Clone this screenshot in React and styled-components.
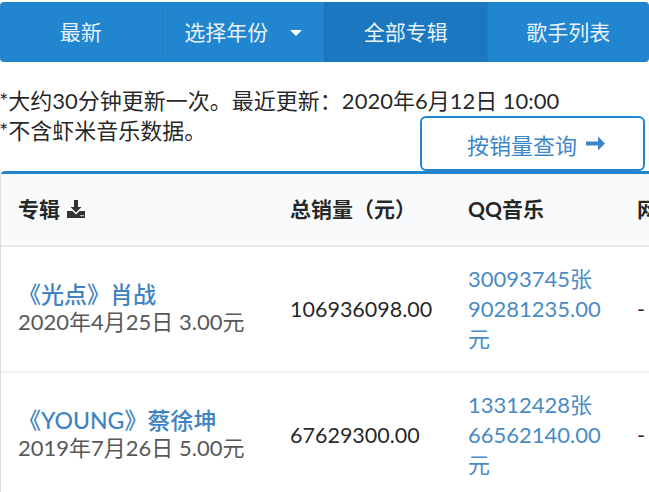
import React from 'react'
import styled, { createGlobalStyle } from 'styled-components'

const Global = createGlobalStyle`
  html, body { margin: 0; padding: 0; background: #fff; }
  body {
    font-family: Lato, "Noto Sans CJK SC", "Noto Sans", sans-serif;
    font-size: 21px;
    line-height: 30px;
    color: rgba(0,0,0,.87);
    overflow: hidden;
  }
`

const Page = styled.div`
  width: 649px;
  height: 492px;
  overflow: hidden;
  padding-top: 2px;
  box-sizing: border-box;
`

const Menu = styled.nav`
  display: flex;
  height: 60px;
  background: #2185d0;
  border-radius: 4px;
  overflow: hidden;
`

const Item = styled.a`
  flex: 1;
  display: flex;
  align-items: center;
  justify-content: center;
  color: rgba(255,255,255,.92);
  font-size: 21px;
  background: ${p => (p.$active ? '#1b78c0' : 'transparent')};
  border-left: ${p => (p.$first ? 'none' : '1px solid rgba(0,0,0,.06)')};
  cursor: pointer;
`

const Caret = styled.span`
  width: 0;
  height: 0;
  border-left: 6px solid transparent;
  border-right: 6px solid transparent;
  border-top: 6px solid #fff;
  margin-left: 22px;
  margin-top: 2px;
`

const Notes = styled.div`
  margin-top: 24px;
  margin-left: -1px;
`

const NoteLine = styled.div`
  font-size: 22px;
  line-height: 30px;
  white-space: nowrap;
`

const NoteRow = styled.div`
  display: flex;
  justify-content: space-between;
  align-items: flex-start;
`

const QueryButton = styled.button`
  width: 225px;
  height: 55px;
  margin-right: 4px;
  border: 2px solid #2185d0;
  border-radius: 6px;
  background: #fff;
  color: #3b86c8;
  font-family: inherit;
  font-size: 22px;
  display: flex;
  align-items: center;
  justify-content: center;
  gap: 8px;
  cursor: pointer;
  padding: 0 0 0 8px;
`

const TableWrap = styled.div`
  width: 649px;
  overflow: hidden;
`

const Table = styled.table`
  width: 1000px;
  table-layout: fixed;
  border-collapse: separate;
  border-spacing: 0;
  border: 1px solid rgba(34,36,38,.15);
  border-top: 3px solid #2185d0;
  border-radius: 5px 5px 0 0;
`

const Th = styled.th`
  background: #f9fafb;
  text-align: left;
  font-weight: 700;
  font-size: 21px;
  line-height: 30px;
  padding: 20px 17px 21px;
  border-bottom: 2px solid rgba(34,36,38,.08);
  white-space: nowrap;
  color: rgba(0,0,0,.87);
`

const Td = styled.td`
  padding: 17px 10px 17px 17px;
  vertical-align: middle;
  font-size: ${p => (p.$link ? '22px' : '21.5px')};
  line-height: 30px;
  border-bottom: 2px solid rgba(34,36,38,.07);
  color: ${p => (p.$link ? '#4a8ac6' : 'rgba(0,0,0,.87)')};
  word-break: break-all;
`

const Title = styled.div`
  color: #3f83c3;
  font-size: 23px;
  line-height: 25px;
  font-weight: 500;
  white-space: nowrap;
`

const Meta = styled.div`
  color: #585858;
  font-size: 22px;
  line-height: 30px;
  white-space: nowrap;
`

const DownloadIcon = () => (
  <svg width="20" height="20" viewBox="0 0 20 20" style={{ marginLeft: 6, verticalAlign: -2 }}>
    <path d="M8 1h4v7h3.5L10 13.5 4.5 8H8z" fill="#333" />
    <path d="M1 12h5.5l3.5 3.5 3.5-3.5H19v7H1z" fill="#333" />
    <rect x="14.5" y="16" width="1.3" height="1.3" fill="#f9fafb" />
    <rect x="16.5" y="16" width="1.3" height="1.3" fill="#f9fafb" />
  </svg>
)

const Arrow = () => (
  <svg width="21" height="17" viewBox="0 0 21 17">
    <path d="M1 6.6h12V1.5L20 8.5l-7 7V10.4H1z" fill="#3b86c8" />
  </svg>
)

const albums = [
  {
    name: '《光点》',
    artist: '肖战',
    date: '2020年4月25日',
    price: '3.00元',
    total: '106936098.00',
    qq: '30093745张',
    qqSum: '90281235.00元',
  },
  {
    name: '《YOUNG》',
    artist: '蔡徐坤',
    date: '2019年7月26日',
    price: '5.00元',
    total: '67629300.00',
    qq: '13312428张',
    qqSum: '66562140.00元',
  },
]

export default function App() {
  return (
    <Page>
      <Global />
      <Menu>
        <Item $first>最新</Item>
        <Item>
          选择年份<Caret />
        </Item>
        <Item $active>全部专辑</Item>
        <Item>歌手列表</Item>
      </Menu>
      <Notes>
        <NoteLine>*大约30分钟更新一次。最近更新：2020年6月12日 10:00</NoteLine>
        <NoteRow>
          <NoteLine>*不含虾米音乐数据。</NoteLine>
          <QueryButton>
            按销量查询 <Arrow />
          </QueryButton>
        </NoteRow>
      </Notes>
      <TableWrap>
        <Table>
          <colgroup>
            <col style={{ width: 272 }} />
            <col style={{ width: 178 }} />
            <col style={{ width: 169 }} />
            <col style={{ width: 200 }} />
            <col />
          </colgroup>
          <thead>
            <tr>
              <Th>
                专辑
                <DownloadIcon />
              </Th>
              <Th>总销量（元）</Th>
              <Th>QQ音乐</Th>
              <Th>网易云音乐</Th>
              <Th>酷狗音乐</Th>
            </tr>
          </thead>
          <tbody>
            {albums.map(a => (
              <tr key={a.name}>
                <Td>
                  <Title>
                    {a.name}
                    {a.artist}
                  </Title>
                  <Meta>
                    {a.date} {a.price}
                  </Meta>
                </Td>
                <Td>{a.total}</Td>
                <Td $link>
                  {a.qq}
                  <br />
                  {a.qqSum}
                </Td>
                <Td>-</Td>
                <Td>-</Td>
              </tr>
            ))}
          </tbody>
        </Table>
      </TableWrap>
    </Page>
  )
}
